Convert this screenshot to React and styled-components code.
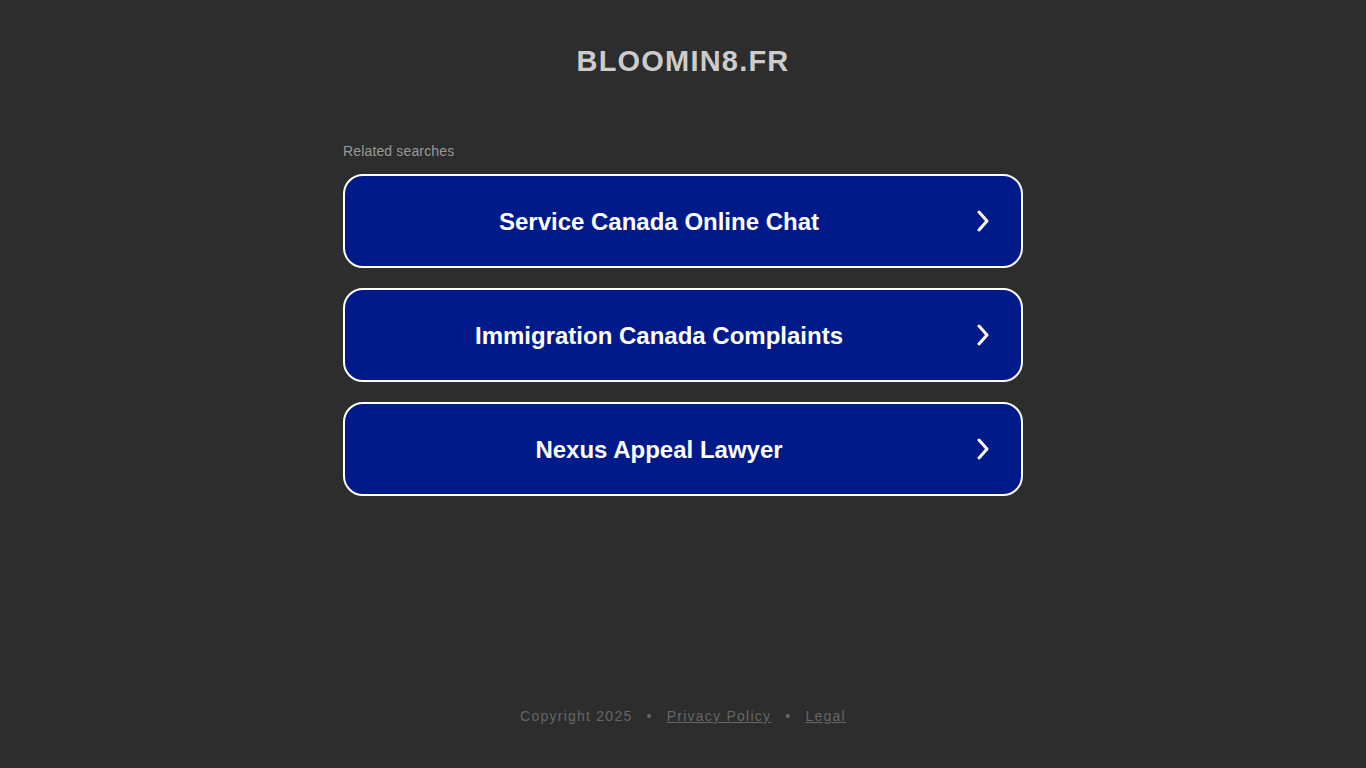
import styled, { createGlobalStyle } from "styled-components";

const GlobalStyle = createGlobalStyle`
  html, body {
    margin: 0;
    padding: 0;
    background: #2d2d2d;
    font-family: "Liberation Sans", Arial, sans-serif;
  }
`;

const Page = styled.div`
  min-height: 768px;
  display: flex;
  flex-direction: column;
  align-items: center;
`;

const Title = styled.h1`
  margin: 0;
  padding-top: 43px;
  font-size: 29px;
  line-height: 36px;
  font-weight: bold;
  letter-spacing: 1.2px;
  color: #cccccc;
`;

const Searches = styled.div`
  width: 680px;
  margin-top: 64px;
  display: flex;
  flex-direction: column;
  gap: 20px;
`;

const Label = styled.div`
  font-size: 14px;
  line-height: 16px;
  letter-spacing: 0.15px;
  color: #999999;
  margin-bottom: -5px;
`;

const SearchButton = styled.a`
  box-sizing: border-box;
  height: 94px;
  display: flex;
  align-items: center;
  padding: 0 14px;
  background: #011a8a;
  border: 2px solid #ffffff;
  border-radius: 20px;
  color: #ffffff;
  text-decoration: none;
  cursor: pointer;
`;

const ButtonText = styled.span`
  flex: 1;
  padding-top: 2px;
  text-align: center;
  font-size: 24px;
  font-weight: bold;
`;

const Arrow = styled.span`
  width: 48px;
  display: flex;
  justify-content: center;
`;

const Footer = styled.footer`
  margin-top: auto;
  padding-bottom: 44px;
  font-size: 14px;
  letter-spacing: 1.25px;
  color: #666666;
  display: flex;
  gap: 14px;
`;

const FooterLink = styled.a`
  color: #666666;
  text-decoration: underline;
`;

const Chevron = () => (
  <svg width="14" height="22" viewBox="0 0 14 22">
    <path d="M3 2 L11 11 L3 20" fill="none" stroke="#fff" strokeWidth="3" strokeLinecap="round" strokeLinejoin="round" />
  </svg>
);

const items = ["Service Canada Online Chat", "Immigration Canada Complaints", "Nexus Appeal Lawyer"];

export default function App() {
  return (
    <>
      <GlobalStyle />
      <Page>
        <Title>BLOOMIN8.FR</Title>
        <Searches>
          <Label>Related searches</Label>
          {items.map((t) => (
            <SearchButton key={t}>
              <ButtonText>{t}</ButtonText>
              <Arrow><Chevron /></Arrow>
            </SearchButton>
          ))}
        </Searches>
        <Footer>
          <span>Copyright 2025</span>
          <span>•</span>
          <FooterLink>Privacy Policy</FooterLink>
          <span>•</span>
          <FooterLink>Legal</FooterLink>
        </Footer>
      </Page>
    </>
  );
}
